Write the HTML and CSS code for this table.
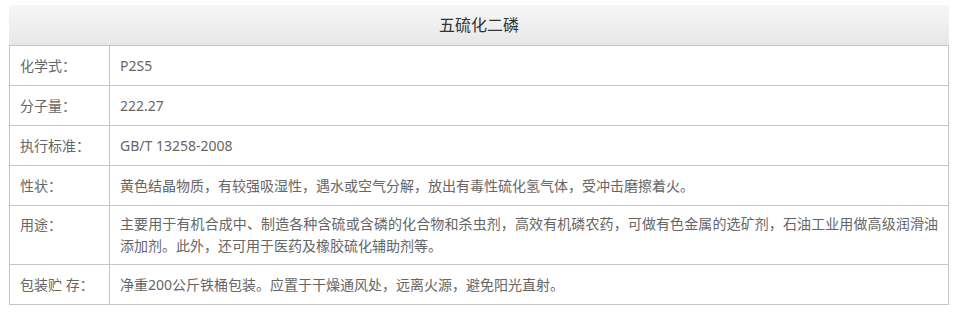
FILE: index.html
```html
<!DOCTYPE html>
<html lang="zh-CN">
<head>
<meta charset="utf-8">
<title>五硫化二磷</title>
<link rel="stylesheet" href="styles.css">
</head>
<body>
<div class="wrap">
  <div class="title">五硫化二磷</div>
  <table class="spec">
    <tr><td class="label">化学式：</td><td class="value">P2S5</td></tr>
    <tr><td class="label">分子量：</td><td class="value">222.27</td></tr>
    <tr><td class="label">执行标准：</td><td class="value">GB/T 13258-2008</td></tr>
    <tr><td class="label">性状：</td><td class="value">黄色结晶物质，有较强吸湿性，遇水或空气分解，放出有毒性硫化氢气体，受冲击磨擦着火。</td></tr>
    <tr><td class="label top">用途：</td><td class="value">主要用于有机合成中、制造各种含硫或含磷的化合物和杀虫剂，高效有机磷农药，可做有色金属的选矿剂，石油工业用做高级润滑油添加剂。此外，还可用于医药及橡胶硫化辅助剂等。</td></tr>
    <tr><td class="label">包装贮 存：</td><td class="value">净重200公斤铁桶包装。应置于干燥通风处，远离火源，避免阳光直射。</td></tr>
  </table>
</div>
</body>
</html>
```
FILE: styles.css
```css
html, body {
  margin: 0;
  padding: 0;
  background: #ffffff;
}

body {
  font-family: "Segoe UI", "Noto Sans", "Noto Sans CJK SC", sans-serif;
}

.wrap {
  width: 940px;
  padding: 5px 0 0 9px;
}

.title {
  height: 40px;
  line-height: 40px;
  text-align: center;
  font-size: 16px;
  color: #333333;
  background: linear-gradient(to bottom, #f7f7f7, #e7e7e7);
}

.spec {
  width: 940px;
  border-collapse: collapse;
  table-layout: fixed;
  font-size: 14px;
  color: #666666;
}

.spec tr {
  height: 40px;
}

.spec td {
  border: 1px solid #c6c6c6;
  padding: 7px 10px;
  line-height: 22px;
  vertical-align: middle;
}

.spec .label {
  width: 79px;
}

.spec .label.top {
  vertical-align: top;
  padding-top: 8px;
}

.spec .value {
  text-align: justify;
  padding-right: 10px;
}
```
